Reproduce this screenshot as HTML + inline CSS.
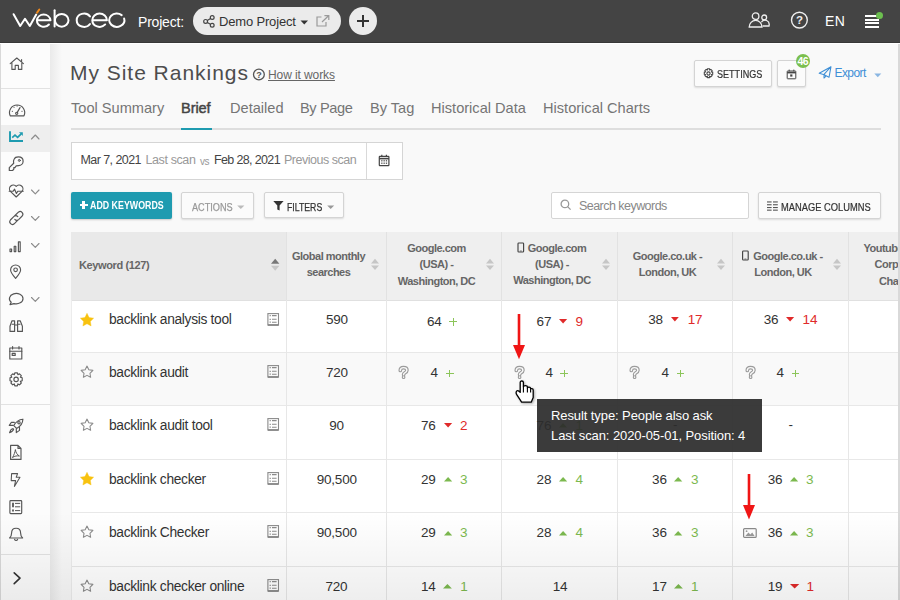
<!DOCTYPE html>
<html><head><meta charset="utf-8">
<style>
*{box-sizing:border-box;margin:0;padding:0}
html,body{width:900px;height:600px;overflow:hidden;background:#f9f9f9;font-family:"Liberation Sans",sans-serif;color:#333;position:relative}
.a{position:absolute;white-space:nowrap}
svg{position:absolute;overflow:visible}
#top{position:absolute;left:0;top:0;width:900px;height:43px;background:#444;border-bottom:1px solid #383838;box-shadow:0 1px 0 #fff}
#side{position:absolute;left:0;top:44px;width:50px;height:556px;background:#fcfcfc;border-left:1px solid #d9d9d9}
#shadow{position:absolute;left:50px;top:44px;width:12px;height:556px;background:linear-gradient(90deg,#eaeaea,#f9f9f9)}
#redge{position:absolute;left:898px;top:44px;width:2px;height:556px;background:#d9d9d9}
.sep{position:absolute;left:1px;width:49px;height:1px;background:#e2e2e2}
.tab{position:absolute;top:100px;font-size:14.6px;color:#757575;white-space:nowrap}
.btn{position:absolute;border:1px solid #d4d4d4;background:#fbfbfb;border-radius:2px;box-shadow:0 1px 2px rgba(0,0,0,.12)}
.th{position:absolute;top:232px;height:68px;background:#efefef}
.tht{position:absolute;font-size:11px;font-weight:bold;color:#666;text-align:center;line-height:16.3px;letter-spacing:-0.5px;white-space:nowrap}
.vl{position:absolute;width:1px;background:#e7e7e7}
.hl{position:absolute;left:71px;width:827px;height:1px;background:#e8e8e8}
.kw{letter-spacing:-0.32px!important;font-size:13.8px!important}
.n{position:absolute;font-size:13.5px;line-height:16px;color:#333;white-space:nowrap;letter-spacing:-0.2px}
.g{color:#7cb94f}
.r{color:#e02a2a}
</style></head>
<body>
<!-- header -->
<div id="top"></div>
<svg style="left:0;top:0" width="140" height="43" viewBox="0 0 140 43">
 <g fill="none" stroke="#fff" stroke-width="2" stroke-linecap="round" stroke-linejoin="round">
  <path d="M13.6 14.2 L20.2 26 L25 18.8 L29.8 26 L36.2 14.6"/>
  <path d="M36.9 20.3 H50.5 A6.85 6.5 0 0 0 36.9 20.3 A6.85 6.5 0 0 0 48.95 24.5"/>
  <path d="M54.6 10.2 V26.4"/>
  <ellipse cx="61.7" cy="20.3" rx="6.8" ry="6.4"/>
  <path d="M89.98 23.99 A7.3 6.6 0 0 1 76.7 20.2 A7.3 6.6 0 0 1 89.98 16.41"/>
  <path d="M92.3 20.2 H106.9 A7.3 6.6 0 0 0 92.3 20.2 A7.3 6.6 0 0 0 105.19 24.44"/>
  <path d="M124.14 18.49 A7.6 6.6 0 0 1 111.43 24.87 A7.6 6.6 0 0 1 121.69 15.14"/>
 </g>
 <path d="M37.1 12.6 L39.3 9.5" stroke="#f08a1c" stroke-width="2" stroke-linecap="round"/>
</svg>
<div class="a" style="left:138px;top:13.5px;font-size:14px;color:#fff;letter-spacing:-0.2px">Project:</div>
<div class="a" style="left:193px;top:7px;width:148px;height:28px;border-radius:14px;background:#ebebeb"></div>
<svg style="left:203px;top:15px" width="12" height="13" viewBox="0 0 12 13">
 <g fill="none" stroke="#444" stroke-width="1.2"><circle cx="2.6" cy="6.4" r="1.9"/><circle cx="9.2" cy="2.5" r="1.9"/><circle cx="9.2" cy="10.3" r="1.9"/><path d="M4.3 5.4 L7.5 3.5 M4.3 7.4 L7.5 9.3"/></g>
</svg>
<div class="a" style="left:219px;top:13.8px;font-size:13px;color:#333;letter-spacing:-0.17px">Demo Project</div>
<svg style="left:300px;top:20px" width="9" height="5" viewBox="0 0 9 5"><path d="M0.5 0.5 H8 L4.25 4.6 Z" fill="#333"/></svg>
<svg style="left:316px;top:15px" width="14" height="12" viewBox="0 0 14 12">
 <g fill="none" stroke="#9a9a9a" stroke-width="1.2"><path d="M5.5 2 H1 V11 H10 V7"/><path d="M6 7 L12.6 0.8 M8.4 0.6 H12.8 V5"/></g>
</svg>
<div class="a" style="left:349px;top:7px;width:28px;height:28px;border-radius:14px;background:#ebebeb"></div>
<div class="a" style="left:357px;top:19.6px;width:12px;height:2.6px;background:#333"></div>
<div class="a" style="left:361.7px;top:15px;width:2.6px;height:11.6px;background:#333"></div>
<svg style="left:748px;top:12px" width="22" height="16" viewBox="0 0 22 16">
 <g fill="none" stroke="#eee" stroke-width="1.3"><circle cx="7.6" cy="4.2" r="3.3"/><path d="M1.2 15 A6.4 6.6 0 0 1 14 15 Z"/><circle cx="16.2" cy="5.4" r="2.4"/><path d="M14.6 14 H21 A4.2 4.6 0 0 0 13.4 10.3"/></g>
</svg>
<svg style="left:790px;top:11px" width="19" height="19" viewBox="0 0 19 19">
 <circle cx="9.4" cy="9.1" r="7.9" fill="none" stroke="#eee" stroke-width="1.4"/>
 <text x="9.4" y="13.4" font-family="Liberation Sans" font-weight="bold" font-size="11.5" fill="#eee" text-anchor="middle">?</text>
</svg>
<div class="a" style="left:825px;top:13px;font-size:14px;color:#fff;letter-spacing:0.3px">EN</div>
<div class="a" style="left:865px;top:15px;width:14px;height:2px;background:#fff"></div>
<div class="a" style="left:865px;top:18.5px;width:14px;height:2px;background:#fff"></div>
<div class="a" style="left:865px;top:22px;width:14px;height:2px;background:#fff"></div>
<div class="a" style="left:865px;top:25.5px;width:14px;height:2px;background:#fff"></div>
<div class="a" style="left:875.5px;top:11.5px;width:7px;height:7px;border-radius:50%;background:#6cbf4f"></div>
<!-- sidebar -->
<div id="side"></div>
<div id="shadow"></div>
<div id="redge"></div>
<div class="sep" style="top:88px"></div>
<div class="a" style="left:1px;top:125px;width:49px;height:27px;background:#eeeeee"></div>
<div class="sep" style="top:404px"></div>
<div class="sep" style="top:554px"></div>
<svg style="left:0;top:0" width="50" height="600" viewBox="0 0 50 600">
 <g fill="none" stroke="#555" stroke-width="1.15" stroke-linejoin="round" stroke-linecap="round">
  <!-- home -->
  <path d="M10.2 63.6 L16.8 58 L23.4 63.6 M21.6 59.6 V61.8 M11.9 62.2 V69.4 H15.2 V65.4 H18.4 V69.4 H21.8 V62.2" stroke-width="1.1"/>
  <!-- gauge -->
  <path d="M10.2 115.8 A7.6 7.6 0 1 1 24 115.8 Z"/>
  <path d="M17.1 112.6 L20 107.6"/><circle cx="16.7" cy="113.3" r="1.1"/>
  <path d="M12.3 111.2 h0.2 M14 107.2 h0.1 M17.1 105.9 v0.2 M21.9 111.2 h0.2"/>
  <!-- chevrons -->
  <path d="M31.5 139 L35.3 135 L39 139" stroke="#8c8c8c"/>
  <path d="M31.5 190 L35.3 193.8 L39 190" stroke="#8c8c8c"/>
  <path d="M31.5 216.5 L35.3 220.3 L39 216.5" stroke="#8c8c8c"/>
  <path d="M31.5 243.5 L35.3 247.3 L39 243.5" stroke="#8c8c8c"/>
  <path d="M31.5 297.5 L35.3 301.3 L39 297.5" stroke="#8c8c8c"/>
  <!-- key -->
  <path d="M14.2 159 C14.8 157.6 16.4 156.9 18.4 156.9 C21.2 156.9 23.1 158.8 23.1 161.2 C23.1 163.8 21 165.6 18.6 165.6 L16.2 165.9 L14.9 167.6 H13.8 V169.2 L12.6 170.5 H9.3 V167.6 L13.7 163.3 C13.3 161.9 13.5 160.2 14.2 159 Z" stroke-width="1.2"/>
  <circle cx="19.3" cy="160.4" r="1" stroke-width="1"/>
  <!-- heart -->
  <path d="M16.2 197 L10.4 191.4 A3.4 3.4 0 0 1 16.2 186.4 A3.4 3.4 0 0 1 22 191.4 Z"/>
  <path d="M9.2 191.2 H13.2 L14.6 189.2 L16.4 193.4 L17.8 191.2 H23.2"/>
  <!-- link -->
  <path d="M15 215.5 L18.4 212.2 A2.7 2.7 0 0 1 22.2 216 L18.6 219.6 A2.7 2.7 0 0 1 14.8 219.4"/>
  <path d="M17.6 220.4 L14.2 223.8 A2.7 2.7 0 0 1 10.4 220 L14 216.4 A2.7 2.7 0 0 1 17.8 216.6"/>
  <!-- bars -->
  <rect x="10" y="249" width="1.6" height="2.6"/><rect x="14.2" y="246.2" width="1.6" height="5.4"/><rect x="18.4" y="241.8" width="1.8" height="9.8"/>
  <!-- pin -->
  <path d="M15.6 278.4 C11.8 274 10.6 271.6 10.6 270 A5 5 0 0 1 20.6 270 C20.6 271.6 19.4 274 15.6 278.4 Z"/>
  <circle cx="15.6" cy="269.8" r="1.8"/>
  <!-- chat -->
  <path d="M10 304.6 L11.2 302.2 A6.8 5.2 0 1 1 14 303.6 Z"/>
  <!-- binoculars -->
  <path d="M10 331.4 V326.2 L12 320.8 H14.6 V331.4 Z M17.6 331.4 V320.8 H20.2 L22.4 326.2 V331.4 Z M14.6 325 H17.6 M12.2 324.2 H14.4 M17.8 324.2 H20"/>
  <!-- calendar -->
  <rect x="9.8" y="348" width="12" height="11"/><path d="M9.8 351.2 H21.8 M12.6 346.6 V349 M19 346.6 V349"/><rect x="12.2" y="353.4" width="3" height="2"/>
  <!-- gear -->
  <circle cx="16.1" cy="379.4" r="2.2"/>
  <path d="M14.8 372.9 H17.4 L17.9 374.7 L19.5 373.8 L21.3 375.6 L20.4 377.2 L22.2 377.8 V380.8 L20.4 381.4 L21.3 383 L19.5 384.8 L17.9 383.9 L17.4 385.8 H14.8 L14.3 383.9 L12.7 384.8 L10.9 383 L11.8 381.4 L10 380.8 V377.8 L11.8 377.2 L10.9 375.6 L12.7 373.8 L14.3 374.7 Z"/>
  <!-- rocket -->
  <path d="M13.8 425.6 C15.8 421.8 18.8 419.5 22.9 419.2 C22.7 423.4 20.5 426.4 16.6 428.4 Z"/>
  <circle cx="19" cy="422.7" r="1.2"/>
  <path d="M14.4 422.3 H11.4 L9.3 425.4 H13.2"/>
  <path d="M13.2 428.5 C11.5 428.8 10.3 430.3 9.6 432.6 C12 431.9 13.3 430.7 13.6 429.2"/>
  <path d="M19.5 427.4 V430.4 L16.3 432.6 V428.7"/>
  <!-- pdf -->
  <path d="M10.6 445.4 H18 L21 448.4 V459.4 H10.6 Z M18 445.4 V448.4 H21"/>
  <path d="M12.8 457.2 C14 454.8 15 452.2 15.4 449.6 C15.8 452.4 17 454.8 19.4 456 C17 455.6 14.8 456 12.8 457.2 Z" stroke-width="1"/>
  <!-- bolt -->
  <path d="M11.6 473.6 H17.6 L16.2 477.2 H20 L14.4 486.4 L15.6 480.6 H11.2 Z" stroke-width="1.05"/>
  <!-- list -->
  <rect x="9.9" y="500.6" width="11.8" height="13" rx="0.8"/><path d="M15.4 503.4 H19.8 M15.4 506.8 H19.8 M15.4 510.6 H19.8" stroke-width="1"/><path d="M13 502.8 V507.2 M13 509.6 V511.4" stroke-width="1.8" stroke-linecap="butt"/>
  <!-- bell -->
  <path d="M9.6 538 H22.6 C21 536.4 20.6 535 20.6 533 C20.6 530 19 528.2 16.1 528.2 C13.2 528.2 11.6 530 11.6 533 C11.6 535 11.2 536.4 9.6 538 Z M14.6 539.4 C15.2 540.6 17 540.6 17.6 539.4"/>
  <!-- chevron right -->
  <path d="M14.2 572.8 L20 578.2 L14.2 583.6" stroke="#333" stroke-width="1.6"/>
 </g>
 <g fill="none" stroke="#1e9bb0" stroke-width="1.9" stroke-linecap="butt">
  <path d="M10 131.2 V141 H23"/>
  <path d="M12.2 137.6 L15 135.2 L17.6 137.4 L21.2 133.8" stroke-width="1.7"/>
 </g>
 <path d="M19 132.2 H22.8 V136 Z" fill="#1e9bb0"/>
</svg>

<!-- title -->
<div class="a" style="left:70px;top:61px;font-size:21px;letter-spacing:0.97px;color:#4d4d4d">My Site Rankings</div>

<svg style="left:252px;top:68px" width="14" height="13" viewBox="0 0 14 13">
 <circle cx="6.9" cy="6.5" r="5.4" fill="none" stroke="#555" stroke-width="1.3"/>
 <text x="6.9" y="10" font-family="Liberation Sans" font-weight="bold" font-size="9" fill="#555" text-anchor="middle">?</text>
</svg>
<div class="a" style="left:268px;top:68px;font-size:12px;color:#666;text-decoration:underline;letter-spacing:-0.09px">How it works</div>

<!-- settings etc -->
<div class="btn" style="left:694px;top:60px;width:78px;height:27px"></div>
<svg style="left:703px;top:68px" width="11" height="11" viewBox="0 0 11 11">
 <g fill="none" stroke="#444" stroke-width="1.1"><circle cx="5.5" cy="5.5" r="1.6"/>
 <path d="M4.6 0.8 H6.4 L6.7 2 L7.8 1.4 L9.1 2.7 L8.5 3.8 L9.7 4.1 V6.2 L8.5 6.5 L9.1 7.6 L7.8 8.9 L6.7 8.3 L6.4 9.6 H4.6 L4.3 8.3 L3.2 8.9 L1.9 7.6 L2.5 6.5 L1.3 6.2 V4.1 L2.5 3.8 L1.9 2.7 L3.2 1.4 L4.3 2 Z"/></g>
</svg>
<div class="a" style="left:716.5px;top:69px;font-size:10px;color:#333;transform:scaleX(.905);transform-origin:0 0;-webkit-text-stroke:0.2px #333">SETTINGS</div>
<div class="btn" style="left:777px;top:60px;width:29px;height:27px"></div>
<svg style="left:786px;top:69px" width="11" height="11" viewBox="0 0 11 11">
 <g fill="none" stroke="#444" stroke-width="1"><rect x="1.2" y="2" width="8.6" height="7.8" rx="0.5"/><path d="M1.2 3.6 H9.8" stroke-width="1.6"/><path d="M3.2 0.6 V2.4 M7.8 0.6 V2.4"/></g>
 <rect x="4.2" y="5.4" width="2.2" height="2.2" fill="#444"/>
</svg>
<div class="a" style="left:796px;top:54px;width:14px;height:14px;border-radius:50%;background:#7bbf4e;color:#fff;font-size:10.5px;font-weight:bold;text-align:center;line-height:14px;letter-spacing:-0.7px;text-indent:-0.5px">46</div>
<svg style="left:818px;top:66px" width="15" height="14" viewBox="0 0 15 14">
 <g fill="none" stroke="#3e8fd6" stroke-width="1.05" stroke-linejoin="round"><path d="M1.2 7.3 L13 0.7 L11 11.3 L6.2 8.8 Z M13 0.7 L6 8.3 V12 L8 10.2"/></g>
</svg>
<div class="a" style="left:834.5px;top:66px;font-size:12px;color:#3e8fd6;letter-spacing:-0.57px">Export</div>
<svg style="left:874px;top:73px" width="8" height="5" viewBox="0 0 8 5"><path d="M0.3 0.5 H7.3 L3.8 4.3 Z" fill="#8ab6e2"/></svg>

<!-- date box -->
<div class="a" style="left:71px;top:142px;width:332px;height:38px;background:#fff;border:1px solid #d5d5d5"></div>
<div class="a" style="left:366px;top:143px;width:1px;height:36px;background:#d9d9d9"></div>
<div class="a" style="left:80.5px;top:153px;font-size:12.5px;letter-spacing:-0.57px;color:#444">Mar 7, 2021</div>
<div class="a" style="left:145.5px;top:153px;font-size:12.5px;letter-spacing:-0.39px;color:#999">Last scan</div>
<div class="a" style="left:200px;top:155.5px;font-size:10px;letter-spacing:-0.4px;color:#999">vs</div>
<div class="a" style="left:214px;top:153px;font-size:12.5px;letter-spacing:-0.64px;color:#444">Feb 28, 2021</div>
<div class="a" style="left:284px;top:153px;font-size:12.5px;letter-spacing:-0.48px;color:#999">Previous scan</div>
<svg style="left:378px;top:154px" width="13" height="13" viewBox="0 0 13 13">
 <g fill="none" stroke="#444" stroke-width="1.2"><rect x="1.3" y="2.4" width="9.6" height="9.2" rx="0.6"/><path d="M1.3 4.6 H10.9" stroke-width="1.6"/><path d="M3.8 0.8 V3 M8.4 0.8 V3"/></g>
 <g fill="#444"><rect x="3.2" y="6.2" width="1.3" height="1.2"/><rect x="5.5" y="6.2" width="1.3" height="1.2"/><rect x="7.8" y="6.2" width="1.3" height="1.2"/><rect x="3.2" y="8.6" width="1.3" height="1.2"/><rect x="5.5" y="8.6" width="1.3" height="1.2"/><rect x="7.8" y="8.6" width="1.3" height="1.2"/></g>
</svg>

<!-- buttons row -->
<div class="a" style="left:71px;top:192px;width:101px;height:27px;background:#1f9bb0;border-radius:2px;box-shadow:0 1px 2px rgba(0,0,0,.2)"></div>
<div class="a" style="left:79.5px;top:204.3px;width:8px;height:2.2px;background:#fff"></div>
<div class="a" style="left:82.4px;top:201.4px;width:2.2px;height:8px;background:#fff"></div>
<div class="a" style="left:89.5px;top:199.8px;font-size:10px;font-weight:bold;color:#fff;transform:scaleX(.884);transform-origin:0 0">ADD KEYWORDS</div>
<div class="btn" style="left:181px;top:192px;width:73px;height:26.5px"></div>
<div class="a" style="left:191.5px;top:201.5px;font-size:10px;color:#999;transform:scaleX(.915);transform-origin:0 0;-webkit-text-stroke:0.25px #999">ACTIONS</div>
<svg style="left:237px;top:205px" width="8" height="5" viewBox="0 0 8 5"><path d="M0.2 0.5 H7.4 L3.8 4 Z" fill="#bbb"/></svg>
<div class="btn" style="left:264px;top:192px;width:80px;height:26px"></div>
<svg style="left:273px;top:201px" width="11" height="10" viewBox="0 0 11 10"><path d="M0.3 0 H10.6 L6.6 4.4 V9.6 L4.3 8.4 V4.4 Z" fill="#333"/></svg>
<div class="a" style="left:286.5px;top:201.5px;font-size:10px;color:#333;transform:scaleX(.872);transform-origin:0 0;-webkit-text-stroke:0.25px #333">FILTERS</div>
<svg style="left:327px;top:205px" width="8" height="5" viewBox="0 0 8 5"><path d="M0.2 0.5 H7.2 L3.7 4 Z" fill="#999"/></svg>

<div class="a" style="left:551px;top:192px;width:198px;height:27px;background:#fff;border:1px solid #d5d5d5;border-radius:2px"></div>
<svg style="left:560px;top:199px" width="12" height="12" viewBox="0 0 12 12"><g fill="none" stroke="#999" stroke-width="1.3"><circle cx="4.9" cy="4.9" r="3.8"/><path d="M7.6 7.6 L10.6 10.6"/></g></svg>
<div class="a" style="left:579px;top:198.5px;font-size:12.5px;color:#888;letter-spacing:-0.54px">Search keywords</div>

<div class="btn" style="left:758px;top:192px;width:123px;height:27px"></div>
<svg style="left:767px;top:201px" width="12" height="10" viewBox="0 0 12 10"><g fill="#555"><rect x="0" y="0.4" width="4.6" height="1.1"/><rect x="0" y="3.2" width="4.6" height="1.1"/><rect x="0" y="6" width="4.6" height="1.1"/><rect x="0" y="8.6" width="4.6" height="1.1"/><rect x="6" y="0.4" width="4.8" height="1.1"/><rect x="6" y="3.2" width="4.8" height="1.1"/><rect x="6" y="6" width="4.8" height="1.1"/><rect x="6" y="8.6" width="4.8" height="1.1"/></g></svg>
<div class="a" style="left:781px;top:201.5px;font-size:10px;color:#333;transform:scaleX(.933);transform-origin:0 0;-webkit-text-stroke:0.2px #333">MANAGE COLUMNS</div>

<!-- table -->
<div class="a" style="left:71px;top:232px;width:827px;height:68px;background:#efefef"></div>
<div class="a" style="left:71px;top:232px;width:215px;height:68px;background:#e9e9e9"></div>
<div class="a" style="left:71px;top:301px;width:827px;height:299px;background:#fff"></div>
<div class="a" style="left:71px;top:353px;width:827px;height:52px;background:#f9f9f9"></div>
<div class="hl" style="top:300px;background:#e0e0e0"></div>
<div class="hl" style="top:352px"></div>
<div class="hl" style="top:405px"></div>
<div class="hl" style="top:459px"></div>
<div class="hl" style="top:512px"></div>
<div class="hl" style="top:566px"></div>
<div class="vl" style="left:71px;top:300px;height:300px;background:#ececec"></div>
<div class="vl" style="left:286px;top:232px;height:368px"></div>
<div class="vl" style="left:386px;top:232px;height:368px"></div>
<div class="vl" style="left:501px;top:232px;height:368px"></div>
<div class="vl" style="left:617px;top:232px;height:368px"></div>
<div class="vl" style="left:732px;top:232px;height:368px"></div>
<div class="vl" style="left:848px;top:232px;height:368px"></div>

<div class="vl" style="left:286px;top:232px;height:68px;background:#e2e2e2"></div>
<div class="vl" style="left:386px;top:232px;height:68px;background:#e2e2e2"></div>
<div class="vl" style="left:501px;top:232px;height:68px;background:#e2e2e2"></div>
<div class="vl" style="left:617px;top:232px;height:68px;background:#e2e2e2"></div>
<div class="vl" style="left:732px;top:232px;height:68px;background:#e2e2e2"></div>
<div class="vl" style="left:848px;top:232px;height:68px;background:#e2e2e2"></div>
<div class="tht" style="left:79px;top:257px;text-align:left;letter-spacing:-0.38px">Keyword (127)</div>
<div class="tht" style="left:286px;top:247.7px;width:85px">Global monthly<br>searches</div>
<div class="tht" style="left:386px;top:240px;width:101px">Google.com<br>(USA) -<br>Washington, DC</div>
<div class="tht" style="left:501px;top:239.5px;width:102px"><span style="display:inline-block;width:10px"></span>Google.com<br>(USA) -<br>Washington, DC</div>
<div class="tht" style="left:617px;top:247.7px;width:101px">Google.co.uk -<br>London, UK</div>
<div class="tht" style="left:732px;top:247.7px;width:102px"><span style="display:inline-block;width:10px"></span>Google.co.uk -<br>London, UK</div>
<div class="a" style="left:849px;top:232px;width:49px;height:68px;overflow:hidden">
<div class="tht" style="left:14.5px;top:8px;text-align:left">Youtube -</div>
<div class="tht" style="left:25.5px;top:24.3px;text-align:left">Corporate</div>
<div class="tht" style="left:30px;top:40.6px;text-align:left">Channel</div>
</div>
<svg style="left:0;top:0" width="900" height="300" viewBox="0 0 900 300">
 <path d="M271 263.7 L275.2 258.8 L279.4 263.7 Z" fill="#777"/><path d="M271 265.8 L275.2 270.8 L279.4 265.8 Z" fill="#c6c6c6"/>
 <g fill="#c6c6c6">
  <path d="M371 263.4 L375 258.8 L379 263.4 Z M371 265.4 L375 270 L379 265.4 Z"/>
  <path d="M486 263.4 L490 258.8 L494 263.4 Z M486 265.4 L490 270 L494 265.4 Z"/>
  <path d="M602 263.4 L606 258.8 L610 263.4 Z M602 265.4 L606 270 L610 265.4 Z"/>
  <path d="M717 263.4 L721 258.8 L725 263.4 Z M717 265.4 L721 270 L725 265.4 Z"/>
  <path d="M833 263.4 L837 258.8 L841 263.4 Z M833 265.4 L837 270 L841 265.4 Z"/>
 </g>
 <g fill="none" stroke="#444" stroke-width="1.15">
  <rect x="518" y="243" width="5.6" height="9" rx="0.8"/>
  <rect x="742.6" y="251" width="5.6" height="9" rx="0.8"/>
 </g>
 <path d="M519.8 251 H521.8 M744.4 259 H746.4" stroke="#555" stroke-width="0.8"/>
</svg>

<!-- rows -->
<svg style="left:80px;top:312.7px" width="14" height="14" viewBox="0 0 14 14"><path d="M7.00 0.30 L9.06 4.47 L13.66 5.14 L10.33 8.38 L11.11 12.96 L7.00 10.80 L2.89 12.96 L3.67 8.38 L0.34 5.14 L4.94 4.47 Z" fill="#f8c20f" stroke="#f8c20f" stroke-width="0.4" stroke-linejoin="round"/></svg>
<div class="n kw" style="left:109px;top:311.52px;">backlink analysis tool</div>
<svg style="left:267px;top:313px" width="12" height="13" viewBox="0 0 12 13"><g fill="none" stroke="#8a8a8a" stroke-width="1.1"><rect x="0.9" y="0.6" width="10.6" height="11.4"/><path d="M5 2.6 H9.6 M5 6.3 H9.6 M5 9.2 H9.6"/><path d="M0.9 12 H11.5" stroke-width="1.8"/></g><path d="M2.6 2.6 H3.8 M2.6 6.3 H3.8 M2.6 9.2 H3.8" stroke="#8a8a8a" stroke-width="1.3"/></svg>
<div class="n " style="left:326px;top:311.62px;">590</div>
<svg style="left:80px;top:364.7px" width="14" height="14" viewBox="0 0 14 14"><path d="M7.00 1.10 L8.82 4.79 L12.90 5.38 L9.95 8.26 L10.64 12.32 L7.00 10.40 L3.36 12.32 L4.05 8.26 L1.10 5.38 L5.18 4.79 Z" fill="none" stroke="#8a8a8a" stroke-width="1.05" stroke-linejoin="round"/></svg>
<div class="n kw" style="left:109px;top:364.52px;">backlink audit</div>
<svg style="left:267px;top:365px" width="12" height="13" viewBox="0 0 12 13"><g fill="none" stroke="#8a8a8a" stroke-width="1.1"><rect x="0.9" y="0.6" width="10.6" height="11.4"/><path d="M5 2.6 H9.6 M5 6.3 H9.6 M5 9.2 H9.6"/><path d="M0.9 12 H11.5" stroke-width="1.8"/></g><path d="M2.6 2.6 H3.8 M2.6 6.3 H3.8 M2.6 9.2 H3.8" stroke="#8a8a8a" stroke-width="1.3"/></svg>
<div class="n " style="left:326px;top:364.62px;">720</div>
<svg style="left:80px;top:417.7px" width="14" height="14" viewBox="0 0 14 14"><path d="M7.00 1.10 L8.82 4.79 L12.90 5.38 L9.95 8.26 L10.64 12.32 L7.00 10.40 L3.36 12.32 L4.05 8.26 L1.10 5.38 L5.18 4.79 Z" fill="none" stroke="#8a8a8a" stroke-width="1.05" stroke-linejoin="round"/></svg>
<div class="n kw" style="left:109px;top:417.52px;">backlink audit tool</div>
<svg style="left:267px;top:418px" width="12" height="13" viewBox="0 0 12 13"><g fill="none" stroke="#8a8a8a" stroke-width="1.1"><rect x="0.9" y="0.6" width="10.6" height="11.4"/><path d="M5 2.6 H9.6 M5 6.3 H9.6 M5 9.2 H9.6"/><path d="M0.9 12 H11.5" stroke-width="1.8"/></g><path d="M2.6 2.6 H3.8 M2.6 6.3 H3.8 M2.6 9.2 H3.8" stroke="#8a8a8a" stroke-width="1.3"/></svg>
<div class="n " style="left:329.3px;top:417.62px;">90</div>
<svg style="left:80px;top:471.7px" width="14" height="14" viewBox="0 0 14 14"><path d="M7.00 0.30 L9.06 4.47 L13.66 5.14 L10.33 8.38 L11.11 12.96 L7.00 10.80 L2.89 12.96 L3.67 8.38 L0.34 5.14 L4.94 4.47 Z" fill="#f8c20f" stroke="#f8c20f" stroke-width="0.4" stroke-linejoin="round"/></svg>
<div class="n kw" style="left:109px;top:471.52px;">backlink checker</div>
<svg style="left:267px;top:472px" width="12" height="13" viewBox="0 0 12 13"><g fill="none" stroke="#8a8a8a" stroke-width="1.1"><rect x="0.9" y="0.6" width="10.6" height="11.4"/><path d="M5 2.6 H9.6 M5 6.3 H9.6 M5 9.2 H9.6"/><path d="M0.9 12 H11.5" stroke-width="1.8"/></g><path d="M2.6 2.6 H3.8 M2.6 6.3 H3.8 M2.6 9.2 H3.8" stroke="#8a8a8a" stroke-width="1.3"/></svg>
<div class="n " style="left:316.7px;top:471.62px;">90,500</div>
<svg style="left:80px;top:524.7px" width="14" height="14" viewBox="0 0 14 14"><path d="M7.00 1.10 L8.82 4.79 L12.90 5.38 L9.95 8.26 L10.64 12.32 L7.00 10.40 L3.36 12.32 L4.05 8.26 L1.10 5.38 L5.18 4.79 Z" fill="none" stroke="#8a8a8a" stroke-width="1.05" stroke-linejoin="round"/></svg>
<div class="n kw" style="left:109px;top:524.52px;">backlink Checker</div>
<svg style="left:267px;top:525px" width="12" height="13" viewBox="0 0 12 13"><g fill="none" stroke="#8a8a8a" stroke-width="1.1"><rect x="0.9" y="0.6" width="10.6" height="11.4"/><path d="M5 2.6 H9.6 M5 6.3 H9.6 M5 9.2 H9.6"/><path d="M0.9 12 H11.5" stroke-width="1.8"/></g><path d="M2.6 2.6 H3.8 M2.6 6.3 H3.8 M2.6 9.2 H3.8" stroke="#8a8a8a" stroke-width="1.3"/></svg>
<div class="n " style="left:316.7px;top:524.62px;">90,500</div>
<svg style="left:80px;top:578.7px" width="14" height="14" viewBox="0 0 14 14"><path d="M7.00 1.10 L8.82 4.79 L12.90 5.38 L9.95 8.26 L10.64 12.32 L7.00 10.40 L3.36 12.32 L4.05 8.26 L1.10 5.38 L5.18 4.79 Z" fill="none" stroke="#8a8a8a" stroke-width="1.05" stroke-linejoin="round"/></svg>
<div class="n kw" style="left:109px;top:578.52px;">backlink checker online</div>
<svg style="left:267px;top:579px" width="12" height="13" viewBox="0 0 12 13"><g fill="none" stroke="#8a8a8a" stroke-width="1.1"><rect x="0.9" y="0.6" width="10.6" height="11.4"/><path d="M5 2.6 H9.6 M5 6.3 H9.6 M5 9.2 H9.6"/><path d="M0.9 12 H11.5" stroke-width="1.8"/></g><path d="M2.6 2.6 H3.8 M2.6 6.3 H3.8 M2.6 9.2 H3.8" stroke="#8a8a8a" stroke-width="1.3"/></svg>
<div class="n " style="left:325.5px;top:578.62px;">720</div>
<div class="n " style="left:427px;top:313.52px;">64</div>
<div class="a" style="left:449.3px;top:321.2px;width:8.0px;height:1.3px;background:#8cc55a"></div>
<div class="a" style="left:452.65000000000003px;top:317.8px;width:1.3px;height:8.0px;background:#8cc55a"></div>
<div class="n " style="left:536.6px;top:313.52px;">67</div>
<svg style="left:558.9px;top:319.0px" width="8.200000000000045" height="4.5" viewBox="0 0 8.200000000000045 4.5"><path d="M0 0 L8.200000000000045 0 L4.100000000000023 4.5 Z" fill="#e02a2a"/></svg>
<div class="n r" style="left:575.5px;top:313.52px;">9</div>
<div class="n " style="left:648.3px;top:311.52px;">38</div>
<svg style="left:671.1px;top:317.0px" width="7.7999999999999545" height="4.5" viewBox="0 0 7.7999999999999545 4.5"><path d="M0 0 L7.7999999999999545 0 L3.8999999999999773 4.5 Z" fill="#e02a2a"/></svg>
<div class="n r" style="left:687.7px;top:311.52px;">17</div>
<div class="n " style="left:763.7px;top:311.52px;">36</div>
<svg style="left:786.2px;top:317.0px" width="8.199999999999932" height="4.5" viewBox="0 0 8.199999999999932 4.5"><path d="M0 0 L8.199999999999932 0 L4.099999999999966 4.5 Z" fill="#e02a2a"/></svg>
<div class="n r" style="left:802.6px;top:311.52px;">14</div>
<svg style="left:398.0px;top:365.8px" width="11" height="13" viewBox="0 0 11 13"><g fill="none" stroke-linecap="round" stroke-linejoin="round"><path d="M2.3 4.5 C2.3 2.4 3.8 1.6 5.5 1.6 C7.4 1.6 8.9 2.5 8.9 4.2 C8.9 5.7 7.8 6.3 6.8 6.8 C6 7.2 5.6 7.6 5.6 8.7 M5.6 11 V11.2" stroke="#9c9c9c" stroke-width="3.7"/><path d="M2.3 4.5 C2.3 2.4 3.8 1.6 5.5 1.6 C7.4 1.6 8.9 2.5 8.9 4.2 C8.9 5.7 7.8 6.3 6.8 6.8 C6 7.2 5.6 7.6 5.6 8.7 M5.6 11 V11.2" stroke="#fafafa" stroke-width="1.4"/></g></svg>
<div class="n " style="left:430.6px;top:365.12px;">4</div>
<div class="a" style="left:446px;top:372.8px;width:7.600000000000023px;height:1.3px;background:#8cc55a"></div>
<div class="a" style="left:449.15000000000003px;top:369.6px;width:1.3px;height:7.600000000000023px;background:#8cc55a"></div>
<svg style="left:513.5px;top:365.8px" width="11" height="13" viewBox="0 0 11 13"><g fill="none" stroke-linecap="round" stroke-linejoin="round"><path d="M2.3 4.5 C2.3 2.4 3.8 1.6 5.5 1.6 C7.4 1.6 8.9 2.5 8.9 4.2 C8.9 5.7 7.8 6.3 6.8 6.8 C6 7.2 5.6 7.6 5.6 8.7 M5.6 11 V11.2" stroke="#9c9c9c" stroke-width="3.7"/><path d="M2.3 4.5 C2.3 2.4 3.8 1.6 5.5 1.6 C7.4 1.6 8.9 2.5 8.9 4.2 C8.9 5.7 7.8 6.3 6.8 6.8 C6 7.2 5.6 7.6 5.6 8.7 M5.6 11 V11.2" stroke="#fafafa" stroke-width="1.4"/></g></svg>
<div class="n " style="left:545.5px;top:365.12px;">4</div>
<div class="a" style="left:560.4px;top:372.8px;width:7.600000000000023px;height:1.3px;background:#8cc55a"></div>
<div class="a" style="left:563.5500000000001px;top:369.6px;width:1.3px;height:7.600000000000023px;background:#8cc55a"></div>
<svg style="left:629.1px;top:365.8px" width="11" height="13" viewBox="0 0 11 13"><g fill="none" stroke-linecap="round" stroke-linejoin="round"><path d="M2.3 4.5 C2.3 2.4 3.8 1.6 5.5 1.6 C7.4 1.6 8.9 2.5 8.9 4.2 C8.9 5.7 7.8 6.3 6.8 6.8 C6 7.2 5.6 7.6 5.6 8.7 M5.6 11 V11.2" stroke="#9c9c9c" stroke-width="3.7"/><path d="M2.3 4.5 C2.3 2.4 3.8 1.6 5.5 1.6 C7.4 1.6 8.9 2.5 8.9 4.2 C8.9 5.7 7.8 6.3 6.8 6.8 C6 7.2 5.6 7.6 5.6 8.7 M5.6 11 V11.2" stroke="#fafafa" stroke-width="1.4"/></g></svg>
<div class="n " style="left:661.5px;top:365.12px;">4</div>
<div class="a" style="left:676.7px;top:372.8px;width:7.600000000000023px;height:1.3px;background:#8cc55a"></div>
<div class="a" style="left:679.85px;top:369.6px;width:1.3px;height:7.600000000000023px;background:#8cc55a"></div>
<svg style="left:744.7px;top:365.8px" width="11" height="13" viewBox="0 0 11 13"><g fill="none" stroke-linecap="round" stroke-linejoin="round"><path d="M2.3 4.5 C2.3 2.4 3.8 1.6 5.5 1.6 C7.4 1.6 8.9 2.5 8.9 4.2 C8.9 5.7 7.8 6.3 6.8 6.8 C6 7.2 5.6 7.6 5.6 8.7 M5.6 11 V11.2" stroke="#9c9c9c" stroke-width="3.7"/><path d="M2.3 4.5 C2.3 2.4 3.8 1.6 5.5 1.6 C7.4 1.6 8.9 2.5 8.9 4.2 C8.9 5.7 7.8 6.3 6.8 6.8 C6 7.2 5.6 7.6 5.6 8.7 M5.6 11 V11.2" stroke="#fafafa" stroke-width="1.4"/></g></svg>
<div class="n " style="left:776.6px;top:365.12px;">4</div>
<div class="a" style="left:791.8px;top:372.8px;width:7.600000000000023px;height:1.3px;background:#8cc55a"></div>
<div class="a" style="left:794.9499999999999px;top:369.6px;width:1.3px;height:7.600000000000023px;background:#8cc55a"></div>
<div class="n " style="left:421px;top:417.52px;">76</div>
<svg style="left:444px;top:423.0px" width="8.199999999999989" height="4.5" viewBox="0 0 8.199999999999989 4.5"><path d="M0 0 L8.199999999999989 0 L4.099999999999994 4.5 Z" fill="#e02a2a"/></svg>
<div class="n r" style="left:460px;top:417.52px;">2</div>
<div class="n " style="left:536.6px;top:417.52px;">76</div>
<svg style="left:559px;top:423.3px" width="8" height="4.5" viewBox="0 0 8 4.5"><path d="M0 4.5 L4.0 0 L8 4.5 Z" fill="#7cb94f"/></svg>
<div class="n g" style="left:575.5px;top:417.52px;">1</div>
<div class="n " style="left:673px;top:416.52px;">-</div>
<div class="n " style="left:788.6px;top:416.52px;">-</div>
<div class="n " style="left:421px;top:471.52px;">29</div>
<svg style="left:444px;top:477.3px" width="8.199999999999989" height="4.5" viewBox="0 0 8.199999999999989 4.5"><path d="M0 4.5 L4.099999999999994 0 L8.199999999999989 4.5 Z" fill="#7cb94f"/></svg>
<div class="n g" style="left:460px;top:471.52px;">3</div>
<div class="n " style="left:536.6px;top:471.52px;">28</div>
<svg style="left:558.9px;top:477.3px" width="8.200000000000045" height="4.5" viewBox="0 0 8.200000000000045 4.5"><path d="M0 4.5 L4.100000000000023 0 L8.200000000000045 4.5 Z" fill="#7cb94f"/></svg>
<div class="n g" style="left:575.5px;top:471.52px;">4</div>
<div class="n " style="left:652.1px;top:471.52px;">36</div>
<svg style="left:674.4px;top:477.3px" width="8.300000000000068" height="4.5" viewBox="0 0 8.300000000000068 4.5"><path d="M0 4.5 L4.150000000000034 0 L8.300000000000068 4.5 Z" fill="#7cb94f"/></svg>
<div class="n g" style="left:691px;top:471.52px;">3</div>
<div class="n " style="left:767.7px;top:471.52px;">36</div>
<svg style="left:790px;top:477.3px" width="8.200000000000045" height="4.5" viewBox="0 0 8.200000000000045 4.5"><path d="M0 4.5 L4.100000000000023 0 L8.200000000000045 4.5 Z" fill="#7cb94f"/></svg>
<div class="n g" style="left:806.1px;top:471.52px;">3</div>
<div class="n " style="left:421px;top:524.72px;">29</div>
<svg style="left:444px;top:530.5px" width="8.199999999999989" height="4.5" viewBox="0 0 8.199999999999989 4.5"><path d="M0 4.5 L4.099999999999994 0 L8.199999999999989 4.5 Z" fill="#7cb94f"/></svg>
<div class="n g" style="left:460px;top:524.72px;">3</div>
<div class="n " style="left:536.6px;top:524.72px;">28</div>
<svg style="left:558.9px;top:530.5px" width="8.200000000000045" height="4.5" viewBox="0 0 8.200000000000045 4.5"><path d="M0 4.5 L4.100000000000023 0 L8.200000000000045 4.5 Z" fill="#7cb94f"/></svg>
<div class="n g" style="left:575.5px;top:524.72px;">4</div>
<div class="n " style="left:652.1px;top:524.72px;">36</div>
<svg style="left:674.4px;top:530.5px" width="8.300000000000068" height="4.5" viewBox="0 0 8.300000000000068 4.5"><path d="M0 4.5 L4.150000000000034 0 L8.300000000000068 4.5 Z" fill="#7cb94f"/></svg>
<div class="n g" style="left:691px;top:524.72px;">3</div>
<div class="n " style="left:767.7px;top:524.72px;">36</div>
<svg style="left:790px;top:530.5px" width="8.200000000000045" height="4.5" viewBox="0 0 8.200000000000045 4.5"><path d="M0 4.5 L4.100000000000023 0 L8.200000000000045 4.5 Z" fill="#7cb94f"/></svg>
<div class="n g" style="left:806.1px;top:524.72px;">3</div>
<svg style="left:743px;top:528px" width="14" height="10" viewBox="0 0 14 10"><rect x="0.6" y="0.6" width="12.6" height="8.8" rx="1" fill="none" stroke="#8a8a8a" stroke-width="1.2"/><path d="M2.4 8 L5.4 4.6 L7.4 6.4 L9.2 4.4 L11.6 8 Z" fill="#9a9a9a"/><circle cx="3.6" cy="3.2" r="0.9" fill="#9a9a9a"/></svg>
<div class="n " style="left:421px;top:578.62px;">14</div>
<svg style="left:443.3px;top:584.4px" width="8.899999999999977" height="4.5" viewBox="0 0 8.899999999999977 4.5"><path d="M0 4.5 L4.449999999999989 0 L8.899999999999977 4.5 Z" fill="#7cb94f"/></svg>
<div class="n g" style="left:460.3px;top:578.62px;">1</div>
<div class="n " style="left:552.8px;top:578.62px;">14</div>
<div class="n " style="left:652.1px;top:578.62px;">17</div>
<svg style="left:674px;top:584.4px" width="8.899999999999977" height="4.5" viewBox="0 0 8.899999999999977 4.5"><path d="M0 4.5 L4.449999999999989 0 L8.899999999999977 4.5 Z" fill="#7cb94f"/></svg>
<div class="n g" style="left:691px;top:578.62px;">1</div>
<div class="n " style="left:767.7px;top:578.62px;">19</div>
<svg style="left:789.6px;top:584.0999999999999px" width="9.299999999999955" height="4.5" viewBox="0 0 9.299999999999955 4.5"><path d="M0 0 L9.299999999999955 0 L4.649999999999977 4.5 Z" fill="#e02a2a"/></svg>
<div class="n r" style="left:806.6px;top:578.62px;">1</div>

<!-- /rows -->
<!-- tabs -->
<div class="tab" style="left:71px">Tool Summary</div>
<div class="tab" style="left:181px;color:#444;letter-spacing:-0.1px;-webkit-text-stroke:0.45px #444">Brief</div>
<div class="tab" style="left:230px">Detailed</div>
<div class="tab" style="left:300px;letter-spacing:-0.4px">By Page</div>
<div class="tab" style="left:370px">By Tag</div>
<div class="tab" style="left:431px">Historical Data</div>
<div class="tab" style="left:543px">Historical Charts</div>
<div class="a" style="left:71px;top:128px;width:810px;height:2px;background:#dedede"></div>
<div class="a" style="left:181px;top:128px;width:31px;height:2px;background:#1e9bb0"></div>

<!-- bottom fade -->
<div class="a" style="left:0;top:512px;width:900px;height:88px;background:linear-gradient(rgba(0,0,0,0),rgba(0,0,0,.065))"></div>
<!-- tooltip -->
<div class="a" style="left:537px;top:399px;width:225px;height:52.5px;background:rgba(44,44,44,.93)"></div>
<div class="a" style="left:551px;top:405.5px;font-size:13px;line-height:20px;color:#fff;letter-spacing:-0.09px">Result type: People also ask<br>Last scan: 2020-05-01, Position: 4</div>
<!-- red arrows -->
<svg style="left:0;top:0" width="900" height="600" viewBox="0 0 900 600">
 <g fill="#f01515">
  <rect x="517.7" y="314" width="2.6" height="33"/><path d="M513 345 H525 L519 359.2 Z"/>
  <rect x="747.7" y="474" width="2.6" height="33"/><path d="M743 505 H755 L749 519.5 Z"/>
 </g>
</svg>
<!-- cursor -->
<svg style="left:515px;top:380px" width="20" height="24" viewBox="0 0 20 24">
 <path d="M5.2 2.6 Q5.2 1 6.8 1 Q8.4 1 8.4 2.6 V6.8 Q8.4 5.6 10.4 5.6 Q12.4 5.6 12.4 6.8 V8 Q12.4 7.2 14 7.2 Q15.6 7.2 15.6 8.4 V9.2 Q15.6 8.6 16.8 8.6 Q18.2 8.6 18.2 10 V17.4 L16.2 22.2 H6.6 L1.6 14.4 Q0.6 12.6 1.6 11.2 Q2.6 10 4 11.2 L5.2 12.4 Z" fill="#fff" stroke="#000" stroke-width="1.3" stroke-linejoin="round" style="filter:drop-shadow(1px 1px 1px rgba(0,0,0,.3))"/>
 <path d="M8.4 6.8 V12.6 M12.4 8 V12.6 M15.6 9.2 V12.6" stroke="#000" stroke-width="1.1" fill="none"/>
</svg>
</body></html>
